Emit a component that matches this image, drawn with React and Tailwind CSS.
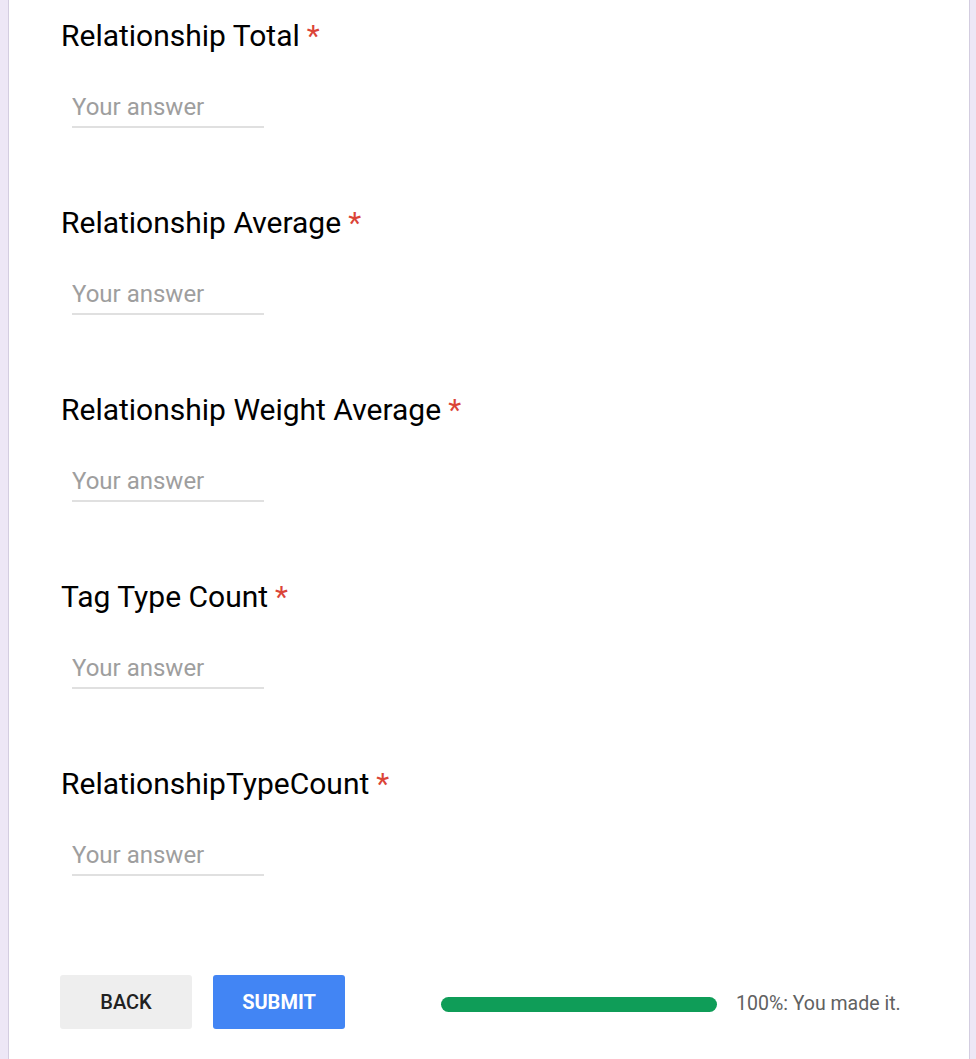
const questions = [
  'Relationship Total',
  'Relationship Average',
  'Relationship Weight Average',
  'Tag Type Count',
  'RelationshipTypeCount',
];

export default function App() {
  return (
    <div className="flex h-[1059px] w-[976px] bg-[#ede7f6] font-['Roboto',sans-serif]">
      <div className="ml-[8px] mr-[6px] flex h-full flex-1 flex-col border-x border-[#d3cde0] bg-white pl-[51px]">
        {questions.map((q) => (
          <div key={q} className="h-[187px] pt-[16px]">
            <h2 className="pl-[1px] text-[30px] leading-[40px] text-[#000]">
              {q}
              <span className="ml-[7px] text-[#db4437]">*</span>
            </h2>
            <input
              placeholder="Your answer"
              className="ml-[12px] mt-[36px] w-[192px] border-b-2 border-[#e0e0e0] pb-[4px] text-[24px] leading-[30px] outline-none placeholder:text-[#9e9e9e]"
            />
          </div>
        ))}
        <div className="mt-[40px] flex items-center">
          <button className="h-[54px] w-[132px] rounded-[3px] bg-[#eeeeee] text-[20px] font-medium text-[#212121]">
            BACK
          </button>
          <button className="ml-[21px] h-[54px] w-[132px] rounded-[3px] bg-[#4285f4] text-[20px] font-bold text-white">
            SUBMIT
          </button>
          <div className="ml-[96px] mt-[4px] h-[15px] w-[276px] rounded-full bg-[#0f9d58]" />
          <span className="ml-[19px] mt-[4px] text-[19.5px] text-[#616161]">100%: You made it.</span>
        </div>
      </div>
    </div>
  );
}
